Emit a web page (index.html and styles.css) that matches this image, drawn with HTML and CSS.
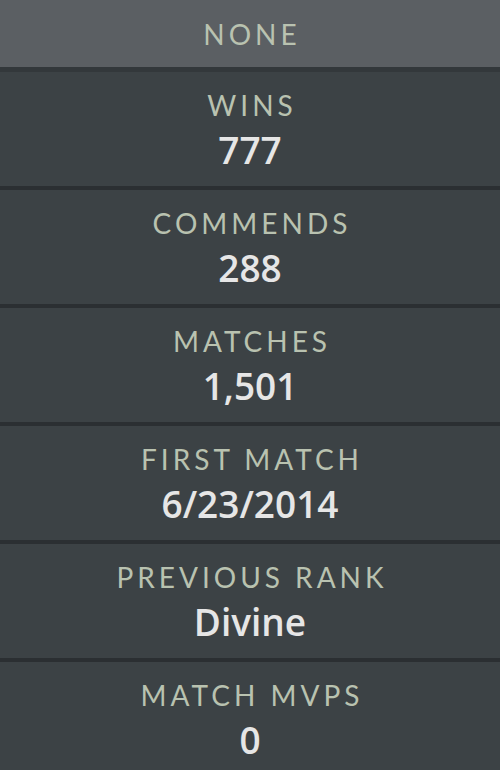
FILE: index.html
```html
<!DOCTYPE html>
<html lang="en">
<head>
  <meta charset="UTF-8" />
  <meta name="viewport" content="width=device-width, initial-scale=1.0"/>
  <title>Profile Stats</title>
  <link rel="stylesheet" href="styles.css">
</head>
<body>
  <header class="rank-header">NONE</header>
  <section class="stats">
    <div class="stat">
      <div class="label">Wins</div>
      <div class="value">777</div>
    </div>
    <div class="stat">
      <div class="label">Commends</div>
      <div class="value">288</div>
    </div>
    <div class="stat">
      <div class="label">Matches</div>
      <div class="value">1,501</div>
    </div>
    <div class="stat">
      <div class="label">First Match</div>
      <div class="value">6/23/2014</div>
    </div>
    <div class="stat">
      <div class="label">Previous Rank</div>
      <div class="value">Divine</div>
    </div>
    <div class="stat">
      <div class="label">Match MVPs</div>
      <div class="value">0</div>
    </div>
  </section>
</body>
</html>
```

FILE: styles.css
```css
* { box-sizing: border-box; }
body {
  margin: 0;
  background-color: #3c4245;
  font-family: "Open Sans", sans-serif;
}
.rank-header {
  height: 72px;
  line-height: 68px;
  text-align: center;
  font-family: Lato, sans-serif;
  font-size: 28px;
  letter-spacing: 4px;
  padding-left: 4px;
  color: #b9c2b0;
  background-color: #5b5f63;
  border-bottom: 5px solid #33383b;
}
.stat {
  height: 118px;
  display: flex;
  flex-direction: column;
  align-items: center;
  padding-top: 17px;
  border-bottom: 4px solid #2b2f32;
}
.label {
  font-family: Lato, sans-serif;
  font-size: 28px;
  line-height: 33px;
  letter-spacing: 4px;
  padding-left: 4px;
  text-transform: uppercase;
  color: #b9c2b0;
}
.value {
  margin-top: 5px;
  font-size: 37px;
  line-height: 46px;
  font-weight: 600;
  color: #e6e6e6;
}
```
